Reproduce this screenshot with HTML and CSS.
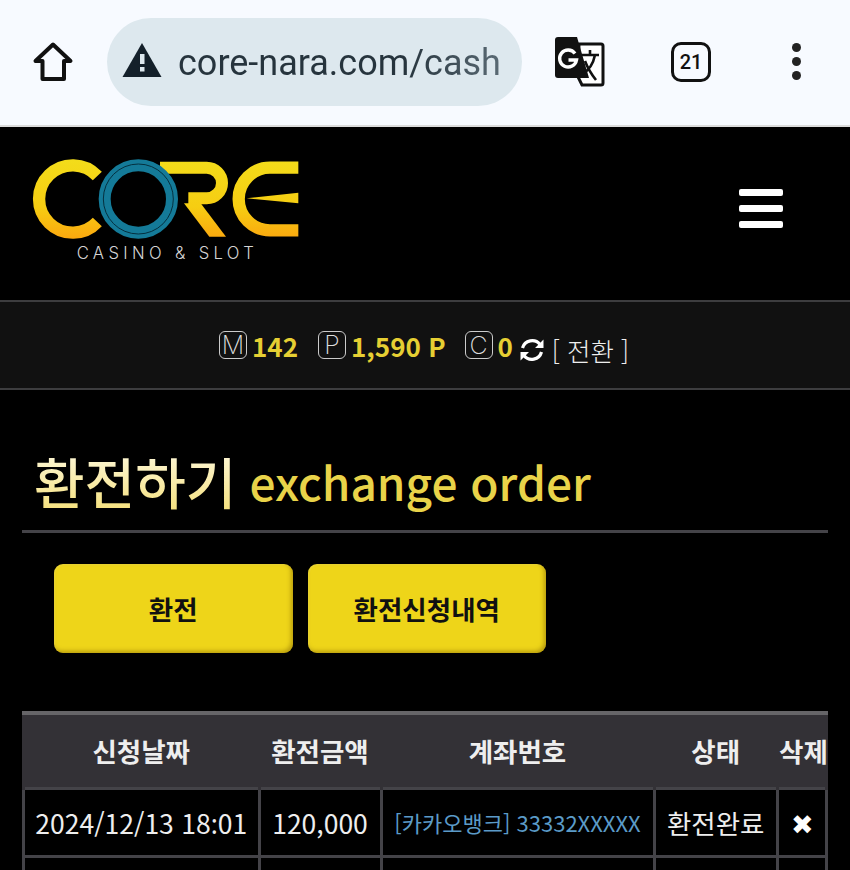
FILE: index.html
```html
<!DOCTYPE html>
<html lang="ko">
 <head>
  <meta charset="utf-8">
  <title>환전하기</title>
  <link rel="stylesheet" href="styles.css">
 </head>
 <body>
  <div class="browser">
	<svg class="ico-home" viewBox="0 0 42 42" width="42" height="42">
		<path d="M21 3.500 L38.500 20 H32 V38 H10.500 V20 H3.500 Z" fill="none" stroke="#111" stroke-width="4" stroke-linejoin="round"/>
	</svg>
	<div class="url">
		<svg viewBox="0 0 40 36" width="40" height="36">
			<path d="M20 1 L39.500 35 H0.500 Z" fill="#14202a"/>
			<rect x="18" y="12" width="4.500" height="10" fill="#dde8ee"/>
			<rect x="18" y="25" width="4.500" height="4.500" fill="#dde8ee"/>
		</svg>
		<span class="url-text">core-nara.com/cash</span>
	</div>
	<svg class="ico-trans" viewBox="0 0 50 50" width="50" height="50">
		<path d="M24 7 H46 Q48 7 48 9 V46 Q48 48 46 48 H27 L23 40 Z" fill="#fff" stroke="#111" stroke-width="3"/>
		<path d="M3 0 H22 L34 41 H3 Q0 41 0 38 V3 Q0 0 3 0 Z" fill="#111"/>
		<path d="M20 16.500 A8.500 8.500 0 1 0 21.500 23 H13.500" fill="none" stroke="#fff" stroke-width="3.400"/>
		<path d="M27 18 H44 M35 13 V18 M40 18 C38 28 33 34 27 37 M30 24 C33 32 37 38 41 43" fill="none" stroke="#111" stroke-width="2.600"/>
	</svg>
	<div class="tabs">21</div>
	<div class="dots"><i></i><i></i><i></i></div>
  </div>

  <div class="header">
	<svg class="logo" viewBox="0 0 900 390" width="300" height="130">
		<defs>
			<linearGradient id="gold" gradientUnits="userSpaceOnUse" x1="0" y1="60" x2="0" y2="296">
				<stop offset="0" stop-color="#f3dc1a"/>
				<stop offset="0.6" stop-color="#f6cd12"/>
				<stop offset="1" stop-color="#fba80f"/>
			</linearGradient>
		</defs>
		<path d="M232 108 A101 101 0 1 0 232 246" fill="none" stroke="url(#gold)" stroke-width="37"/>
		<path d="M420 83 H560 A46 46 0 0 1 560 175 H505" fill="none" stroke="url(#gold)" stroke-width="36"/>
		<polygon points="492,190 542,190 618,290 568,290" fill="url(#gold)"/>
		<path d="M835 83 H750 A93.500 93.500 0 0 0 750 271 H835" fill="none" stroke="url(#gold)" stroke-width="37"/>
		<polygon points="680,175 835,158 835,190" fill="url(#gold)"/>
		<circle cx="355" cy="177" r="101" fill="#000" stroke="#147a98" stroke-width="36"/>
		<circle cx="355" cy="177" r="105" fill="none" stroke="#04303f" stroke-width="3"/>
		<text x="170" y="357" class="logo-sub">CASINO &amp; SLOT</text>
	</svg>
	<div class="menu"><i></i><i></i><i></i></div>
  </div>

  <div class="status">
	<span class="box">M</span><b class="val">142</b>
	<span class="box">P</span><b class="val mid">1,590 P</b>
	<span class="box">C</span><b class="val last">0</b>
	<svg class="ico-sync" viewBox="0 0 26 26" width="26" height="26">
		<path d="M3.500 11 A10 10 0 0 1 21 7.500 M22.500 15 A10 10 0 0 1 5 18.500" fill="none" stroke="#fff" stroke-width="3.200"/>
		<path d="M24.500 2.500 V11 H16 Z M1.500 23.500 V15 H10 Z" fill="#fff"/>
	</svg>
	<span class="swap">[ 전환 ]</span>
  </div>

  <div class="title">
	<h1>환전하기</h1>
	<span class="sub">exchange order</span>
  </div>

  <div class="btns">
	<a class="btn">환전</a>
	<a class="btn">환전신청내역</a>
  </div>

  <table class="list">
	<colgroup>
		<col class="c1"><col class="c2"><col class="c3"><col class="c4"><col class="c5">
	</colgroup>
	<thead>
		<tr>
			<th>신청날짜</th>
			<th>환전금액</th>
			<th>계좌번호</th>
			<th>상태</th>
			<th>삭제</th>
		</tr>
	</thead>
	<tbody>
		<tr>
			<td>2024/12/13 18<span class="colon">:</span>01</td>
			<td>120,000</td>
			<td class="acct">[카카오뱅크] 33332XXXXX</td>
			<td>환전완료</td>
			<td class="del">✖</td>
		</tr>
		<tr>
			<td>&nbsp;</td><td></td><td></td><td></td><td></td>
		</tr>
	</tbody>
  </table>
 </body>
</html>
```

FILE: styles.css
```css
*{margin:0;padding:0;box-sizing:border-box;}
html,body{
	width:850px;
	height:870px;
	overflow:hidden;
}
body{
	background:#000;
	color:#fff;
	font-family:"Noto Sans CJK KR","Noto Sans",sans-serif;
}

/* browser bar */
.browser{
	height:127px;
	background:#f7faff;
	border-bottom:2px solid #dcdcdc;
	display:flex;
	align-items:center;
	padding:0 0 2px 32px;
}
.ico-home{margin-right:33px;}
.url{
	width:415px;
	height:88px;
	border-radius:44px;
	background:#dde8ee;
	display:flex;
	align-items:center;
	padding-left:15px;
	overflow:hidden;
}
.url svg{margin:0 16px 4px 0;}
.url-text{
	font-family:Roboto,sans-serif;
	font-size:36px;
	margin-top:3px;
	white-space:nowrap;
	background:linear-gradient(90deg,#26343d 70%,#5a6a74 100%);
	-webkit-background-clip:text;
	background-clip:text;
	color:transparent;
}
.ico-trans{margin-left:33px;}
.tabs{
	width:40px;
	height:40px;
	margin-left:66px;
	border:3.500px solid #111;
	border-radius:10px;
	font-family:Roboto,sans-serif;
	font-size:20px;
	font-weight:500;
	color:#111;
	display:flex;
	align-items:center;
	justify-content:center;
}
.dots{
	margin-left:81px;
	display:flex;
	flex-direction:column;
	gap:5px;
}
.dots i{
	width:9px;
	height:9px;
	border-radius:50%;
	background:#222;
}

/* logo + menu */
.header{
	height:173px;
	display:flex;
	align-items:flex-start;
	justify-content:space-between;
	padding:13px 67px 0 20px;
}
.logo{display:block;}
.logo-sub{
	font-family:Inter,sans-serif;
	font-weight:300;
	font-size:50px;
	letter-spacing:13px;
	fill:#d4d4d4;
}
.menu{
	margin-top:49px;
	display:flex;
	flex-direction:column;
	gap:9px;
}
.menu i{
	width:44px;
	height:7px;
	border-radius:2px;
	background:#fff;
}

/* money bar */
.status{
	height:90px;
	background:#111;
	border-top:2px solid #3d3d3f;
	border-bottom:2px solid #3d3d3f;
	display:flex;
	align-items:center;
	padding-left:219px;
}
.box{
	width:28px;
	height:28px;
	border:1px solid #ccc;
	border-radius:6px;
	font-family:Inter,sans-serif;
	font-size:25px;
	font-weight:200;
	color:#ddd;
	display:flex;
	align-items:center;
	justify-content:center;
	margin-right:5px;
}
.val{
	font-size:26px;
	font-weight:700;
	color:#e6cf33;
	margin-right:20px;
}
.val.mid{margin-right:19px;}
.val.last{margin-right:6px;}
.ico-sync{margin:10px 7px 0 0;}
.swap{
	font-size:25.500px;
	font-weight:300;
	color:#eee;
	margin-top:8px;
}

/* title */
.title{
	height:143px;
	margin:0 22px;
	padding:46px 0 0 12px;
	border-bottom:3px solid #444348;
	display:flex;
	align-items:flex-start;
}
.title h1{
	font-size:55px;
	font-weight:500;
	line-height:88px;
	background:linear-gradient(#fffdf0,#f4dc6a);
	-webkit-background-clip:text;
	background-clip:text;
	color:transparent;
}
.sub{
	font-size:46px;
	font-weight:500;
	line-height:90px;
	color:#e9d349;
	margin-left:13px;
}

/* buttons */
.btns{
	display:flex;
	gap:15px;
	padding:31px 0 0 54px;
}
.btn{
	width:238.500px;
	height:89px;
	border-radius:9px;
	background:#eed519;
	box-shadow:inset -2px -2px 4px rgba(130,100,0,.5),inset 1px 1px 2px rgba(255,255,255,.15);
	color:#111;
	font-size:26.500px;
	font-weight:700;
	display:flex;
	align-items:center;
	justify-content:center;
}

/* table */
.list{
	width:806px;
	margin:58px 0 0 22px;
	table-layout:fixed;
	border-collapse:collapse;
}
.c1{width:235.500px;}
.c2{width:122px;}
.c3{width:273px;}
.c4{width:123.500px;}
.c5{width:49px;}
.list th{
	height:75px;
	background:#333136;
	border-top:4px solid #666568;
	border-left:3px solid #333136;
	border-right:3px solid #333136;
	color:#eee;
	font-size:26.500px;
	font-weight:700;
	white-space:nowrap;
}
.list td{
	height:68px;
	border:3px solid #444348;
	text-align:center;
	font-size:26.500px;
	font-weight:400;
	color:#eee;
	white-space:nowrap;
}
.list .colon{font-family:"Noto Sans",sans-serif;}
.list .acct{
	font-size:22px;
	color:#5b9bc8;
}
.list .del{
	font-size:27px;
	color:#fff;
}
```
